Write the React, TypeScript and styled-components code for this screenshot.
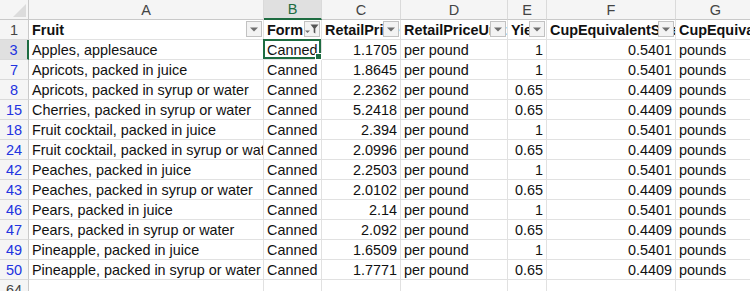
import React from "react";
import styled, { createGlobalStyle, css } from "styled-components";

const GlobalStyle = createGlobalStyle`
  body {
    margin: 0;
    background: #ffffff;
    overflow: hidden;
    font-family: "Liberation Sans", Arial, sans-serif;
  }
`;

const green = "#1e6c41";
const grid = "#e1e1e1";

const Sheet = styled.div`
  display: grid;
  grid-template-columns: 29px 235px 58px 79px 107px 39px 129px 80px;
  grid-auto-rows: 20px;
  width: 750px;
  height: 291px;
  overflow: hidden;
  font-size: 14.4px;
  color: #111;
`;

const Corner = styled.div`
  position: relative;
  background: #f5f5f5;
  border-right: 1px solid #c9c9c9;
  border-bottom: 1px solid #c9c9c9;
  box-sizing: border-box;

  &::after {
    content: "";
    position: absolute;
    right: 2px;
    bottom: 2px;
    border-style: solid;
    border-width: 0 0 13px 13px;
    border-color: transparent transparent #dcdcdc transparent;
  }
`;

const ColHead = styled.div<{ $active?: boolean }>`
  display: flex;
  align-items: center;
  justify-content: center;
  box-sizing: border-box;
  background: #f5f5f5;
  border-right: 1px solid #dadada;
  border-bottom: 1px solid #c9c9c9;
  color: #444;
  font-size: 14.5px;
  ${(p) =>
    p.$active &&
    css`
      background: #e0e0e0;
      color: ${green};
      border-bottom: 2px solid ${green};
    `}
`;

const RowHead = styled.div<{ $filtered?: boolean; $active?: boolean }>`
  display: flex;
  align-items: center;
  justify-content: center;
  box-sizing: border-box;
  background: #f5f5f5;
  border-right: 1px solid #c9c9c9;
  border-bottom: 1px solid #dadada;
  color: ${(p) => (p.$filtered ? "#2233e0" : "#444")};
  font-size: 14.5px;
  padding-top: 1px;
  ${(p) =>
    p.$active &&
    css`
      background: #e0e0e0;
      border-right: 2px solid ${green};
    `}
`;

const Cell = styled.div<{ $num?: boolean; $bold?: boolean }>`
  position: relative;
  display: flex;
  align-items: center;
  justify-content: ${(p) => (p.$num ? "flex-end" : "flex-start")};
  box-sizing: border-box;
  padding: 1px 3px 0 3px;
  border-right: 1px solid ${grid};
  border-bottom: 1px solid ${grid};
  white-space: nowrap;
  overflow: hidden;
  font-weight: ${(p) => (p.$bold ? 700 : 400)};
`;

const Selection = styled.div`
  position: absolute;
  left: -1px;
  top: -1px;
  right: 0;
  bottom: 0;
  border: 2px solid ${green};
  pointer-events: none;

  &::after {
    content: "";
    position: absolute;
    right: -3px;
    bottom: -3px;
    width: 5px;
    height: 5px;
    background: ${green};
    border: 1px solid #fff;
  }
`;

const SelectedCell = styled(Cell)`
  overflow: visible;
  z-index: 2;
`;

const FilterButton = styled.div`
  position: absolute;
  right: 1px;
  top: 1px;
  width: 16px;
  height: 16px;
  box-sizing: border-box;
  background: #f3f3f3;
  border: 1px solid #c2c2c2;
  display: flex;
  align-items: center;
  justify-content: center;
`;

const Arrow = () => (
  <svg width="8" height="5" viewBox="0 0 8 5">
    <path d="M0 0.5h8L4 4.5z" fill="#6e6e6e" />
  </svg>
);

const FunnelArrow = () => (
  <svg width="14" height="12" viewBox="0 0 14 12">
    <path d="M0 7.5h5L2.5 10z" fill="#6e6e6e" />
    <path d="M5.5 1.5h8L10.3 5.5v5l-1.6-1v-4z" fill="#555" />
  </svg>
);

const columns = ["A", "B", "C", "D", "E", "F", "G"];

const headers = [
  "Fruit",
  "Form",
  "RetailPrice",
  "RetailPriceUnit",
  "Yield",
  "CupEquivalentSize",
  "CupEquivalentUnit",
];

type Row = [number, string, string, string, string, string, string, string];

const rows: Row[] = [
  [3, "Apples, applesauce", "Canned", "1.1705", "per pound", "1", "0.5401", "pounds"],
  [7, "Apricots, packed in juice", "Canned", "1.8645", "per pound", "1", "0.5401", "pounds"],
  [8, "Apricots, packed in syrup or water", "Canned", "2.2362", "per pound", "0.65", "0.4409", "pounds"],
  [15, "Cherries, packed in syrup or water", "Canned", "5.2418", "per pound", "0.65", "0.4409", "pounds"],
  [18, "Fruit cocktail, packed in juice", "Canned", "2.394", "per pound", "1", "0.5401", "pounds"],
  [24, "Fruit cocktail, packed in syrup or water", "Canned", "2.0996", "per pound", "0.65", "0.4409", "pounds"],
  [42, "Peaches, packed in juice", "Canned", "2.2503", "per pound", "1", "0.5401", "pounds"],
  [43, "Peaches, packed in syrup or water", "Canned", "2.0102", "per pound", "0.65", "0.4409", "pounds"],
  [46, "Pears, packed in juice", "Canned", "2.14", "per pound", "1", "0.5401", "pounds"],
  [47, "Pears, packed in syrup or water", "Canned", "2.092", "per pound", "0.65", "0.4409", "pounds"],
  [49, "Pineapple, packed in juice", "Canned", "1.6509", "per pound", "1", "0.5401", "pounds"],
  [50, "Pineapple, packed in syrup or water", "Canned", "1.7771", "per pound", "0.65", "0.4409", "pounds"],
];

// numeric columns: C, E, F
const numeric = [false, false, true, false, true, true, false];

export default function App() {
  return (
    <>
      <GlobalStyle />
      <Sheet>
        <Corner />
        {columns.map((c) => (
          <ColHead key={c} $active={c === "B"}>
            {c}
          </ColHead>
        ))}

        <RowHead>1</RowHead>
        {headers.map((h, i) => (
          <Cell key={h} $bold>
            {h}
            {i < 6 && <FilterButton>{i === 1 ? <FunnelArrow /> : <Arrow />}</FilterButton>}
          </Cell>
        ))}

        {rows.map(([n, ...vals]) => (
          <React.Fragment key={n}>
            <RowHead $filtered $active={n === 3}>
              {n}
            </RowHead>
            {vals.map((v, i) =>
              n === 3 && i === 1 ? (
                <SelectedCell key={i}>
                  {v}
                  <Selection />
                </SelectedCell>
              ) : (
                <Cell key={i} $num={numeric[i]}>
                  {v}
                </Cell>
              )
            )}
          </React.Fragment>
        ))}

        <RowHead>64</RowHead>
        {columns.map((c) => (
          <Cell key={c} />
        ))}
      </Sheet>
    </>
  );
}
